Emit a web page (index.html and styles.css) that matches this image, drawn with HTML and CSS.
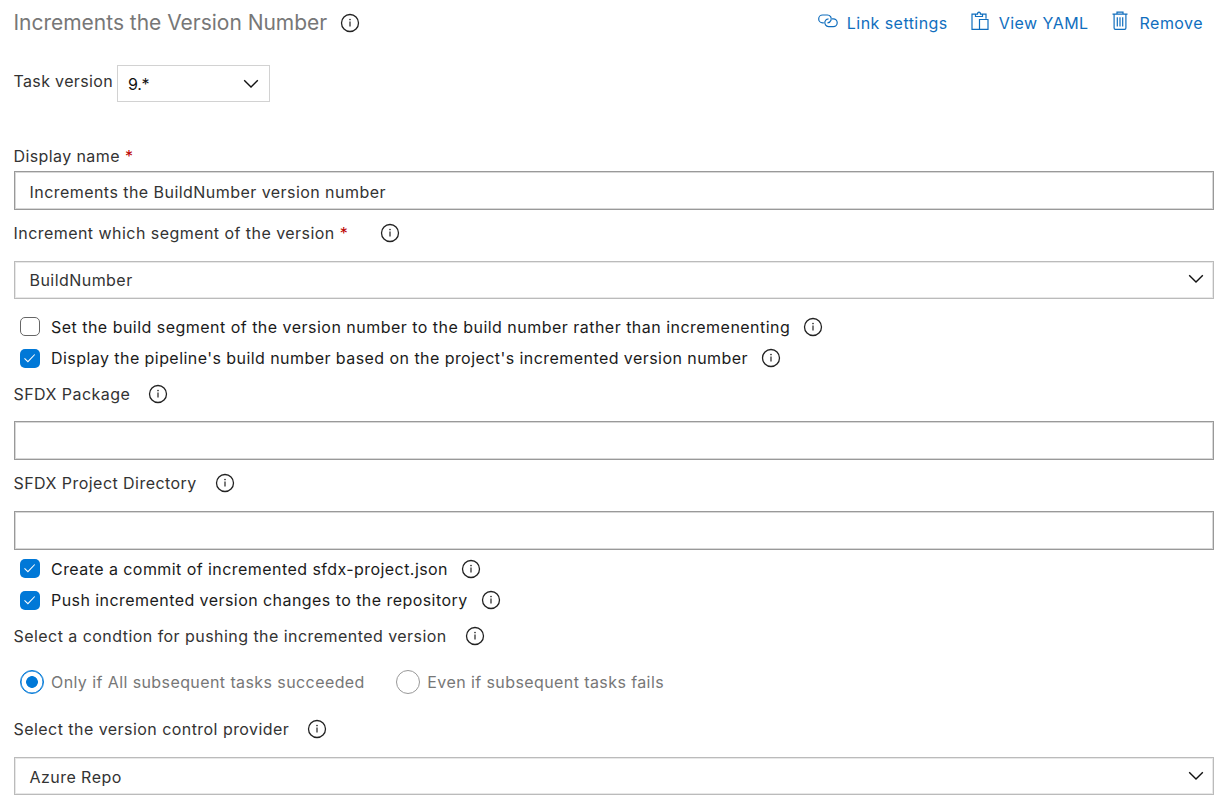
FILE: index.html
```html
<!DOCTYPE html>
<html lang="en">
<head>
<meta charset="utf-8">
<title>Increments the Version Number</title>
<link rel="stylesheet" href="styles.css">
</head>
<body>
<svg class="sprite" aria-hidden="true">
  <symbol id="info" viewBox="0 0 20 20"><circle cx="10" cy="10" r="8.500" fill="none" stroke="currentColor" stroke-width="1.300"/><path d="M10 8.500v5" stroke="currentColor" stroke-width="1.200"/><circle cx="10" cy="6.600" r=".8" fill="currentColor"/></symbol>
  <symbol id="chevron" viewBox="0 0 16 10"><path d="M1.200 1.200 8 8l6.800-6.800" fill="none" stroke="currentColor" stroke-width="1.400"/></symbol>
  <symbol id="check" viewBox="0 0 20 20"><path d="m4.200 9.800 3.600 3.500L15 5.800" fill="none" stroke="currentColor" stroke-width="1.100"/></symbol>
</svg>
<main class="task">
  <header class="header">
    <h1 class="title">Increments the Version Number</h1>
    <svg class="info"><use href="#info"/></svg>
    <nav class="actions">
      <a class="action"><svg class="action-icon link-icon" viewBox="0 0 20 14"><g fill="none" stroke="currentColor" stroke-width="1.200"><path d="M5.800 8.800H4.600A3.900 3.900 0 0 1 4.600 1h4.800a3.900 3.900 0 0 1 3.600 5.300A4 4 0 0 1 9.500 8.900"/><path d="M14 4.800h1.300a3.900 3.900 0 0 1 0 7.800h-4.700A3.900 3.900 0 0 1 7 7.400 4 4 0 0 1 10.500 4.800"/></g></svg><span>Link settings</span></a>
      <a class="action"><svg class="action-icon yaml-icon" viewBox="0 0 18 20"><path d="M8.500 18.300H1V3.200h3.500M11.500 3.200H15v4.500M4.500 5.500V3.200h2C6.500.3 9.500.3 9.500 3.200h2v2.300zM8.500 8.500H17v9.800H8.500z" fill="none" stroke="currentColor" stroke-width="1.200"/></svg><span>View YAML</span></a>
      <a class="action"><svg class="action-icon bin-icon" viewBox="0 0 16 20"><path d="M.5 3.200h15M5 3V1.200h6V3M2.100 3.200v13.900q0 1.300 1.300 1.300h9.200q1.300 0 1.300-1.300V3.200M5.300 6.200v9.200M8 6.200v9.200M10.700 6.200v9.200" fill="none" stroke="currentColor" stroke-width="1.200"/></svg><span>Remove</span></a>
    </nav>
  </header>
  <div class="version">
    <span class="version-label">Task version</span>
    <div class="version-select"><span>9.*</span><svg class="chevron"><use href="#chevron"/></svg></div>
  </div>
  <div class="label label-name"><span>Display name</span><span class="required">*</span></div>
  <div class="input"><span>Increments the BuildNumber version number</span></div>
  <div class="label label-segment"><span>Increment which segment of the version</span><span class="required">*</span><svg class="info info-far"><use href="#info"/></svg></div>
  <div class="select select-segment"><span>BuildNumber</span><svg class="chevron"><use href="#chevron"/></svg></div>
  <div class="checks checks-first">
    <label class="check check-long"><i class="box"></i><span>Set the build segment of the version number to the build number rather than incremenenting</span><svg class="info"><use href="#info"/></svg></label>
    <label class="check"><i class="box box-on"><svg><use href="#check"/></svg></i><span>Display the pipeline's build number based on the project's incremented version number</span><svg class="info"><use href="#info"/></svg></label>
  </div>
  <div class="label label-package"><span>SFDX Package</span><svg class="info"><use href="#info"/></svg></div>
  <div class="input input-empty"></div>
  <div class="label label-directory"><span>SFDX Project Directory</span><svg class="info"><use href="#info"/></svg></div>
  <div class="input input-empty"></div>
  <div class="checks">
    <label class="check"><i class="box box-on"><svg><use href="#check"/></svg></i><span>Create a commit of incremented sfdx-project.json</span><svg class="info"><use href="#info"/></svg></label>
    <label class="check"><i class="box box-on"><svg><use href="#check"/></svg></i><span>Push incremented version changes to the repository</span><svg class="info"><use href="#info"/></svg></label>
  </div>
  <div class="label label-condition"><span>Select a condtion for pushing the incremented version</span><svg class="info"><use href="#info"/></svg></div>
  <div class="radios">
    <label class="radio"><i class="ring ring-on"></i><span>Only if All subsequent tasks succeeded</span></label>
    <label class="radio"><i class="ring"></i><span>Even if subsequent tasks fails</span></label>
  </div>
  <div class="label label-provider"><span>Select the version control provider</span><svg class="info"><use href="#info"/></svg></div>
  <div class="select"><span>Azure Repo</span><svg class="chevron"><use href="#chevron"/></svg></div>
</main>
</body>
</html>
```
FILE: styles.css
```css
* { box-sizing: border-box; }
body {
  margin: 0;
  background: #fff;
  color: #333;
  font: 16px/20px Inter, "Liberation Sans", sans-serif;
  letter-spacing: 0.450px;
}
.sprite { display: none; }
.task {
  display: flex;
  flex-direction: column;
  height: 804px;
  padding: 0 12px 0 13.500px;
  overflow: hidden;
  white-space: nowrap;
}
.info { width: 20px; height: 20px; flex: none; color: #222; }
.header { display: flex; align-items: center; height: 46px; }
.title { margin: 0 13px 0 0; color: #777; font-size: 21px; font-weight: 400; letter-spacing: -0.020px; }
.actions { display: flex; margin: 0 11px 0 auto; gap: 23px; color: #106ebe; }
.action { display: flex; align-items: center; }
.action-icon { flex: none; margin-top: -4px; }
.link-icon { width: 20px; height: 14px; margin-right: 9px; }
.yaml-icon { width: 18px; height: 20px; margin-right: 10px; }
.bin-icon { width: 16px; height: 20px; margin-right: 12px; }
.version { display: flex; gap: 4px; height: 37px; margin: 19px 0 39px; letter-spacing: 0.350px; }
.version-label { padding-top: 6px; }
.version-select {
  display: flex;
  align-items: center;
  justify-content: space-between;
  width: 153px;
  padding: 1px 10px 0;
  border: 1.500px solid #d2d2d2;
  color: #111;
  letter-spacing: -0.300px;
}
.chevron { width: 16px; height: 10px; color: #111; }
.label { display: flex; align-items: center; flex: none; }
.label .info { margin-left: 18px; }
.label .info-far { margin-left: 32px; }
.required { margin-left: 5px; color: #b00; }
.label-name { height: 30px; letter-spacing: 0.400px; }
.label-segment { height: 45px; margin-bottom: 6px; }
.label-package { height: 40px; margin-bottom: 7px; }
.label-directory { height: 44px; margin-bottom: 7px; }
.label-directory { padding-top: 1px; }
.label-condition { height: 40px; }
.label-provider { height: 42px; margin-bottom: 7px; }
.input, .select {
  display: flex;
  align-items: center;
  flex: none;
  height: 39px;
  padding: 3px 15px 0;
  border: 1px solid #999;
  box-shadow: inset 0 0 0 1px #d8d8d8;
}
.select { justify-content: space-between; height: 38px; padding: 1px 9px 0 15px; border-color: #bbb; box-shadow: inset 0 0 0 1px #e8e8e8; }
.select .chevron { margin-top: -2px; }
.select-segment { padding-top: 0; }
.checks { padding: 3px 0 0 6px; }
.checks-first { padding-top: 12px; }
.check { display: flex; align-items: center; height: 31.500px; color: #1b1b1b; letter-spacing: 0.440px; }
.check-long { letter-spacing: 0.475px; }
.check .info { margin-left: 13px; }
.box { width: 20px; height: 19px; margin-right: 11.500px; border: 1.300px solid #666; border-radius: 5px; flex: none; }
.box-on { border: 0; background: #0078d7; color: #fff; }
.box-on svg { display: block; width: 20px; height: 19px; }
.radios { display: flex; height: 52px; padding-left: 6px; gap: 31px; color: #777; letter-spacing: 0.410px; }
.radio { display: flex; align-items: center; }
.radio span { padding-bottom: 1px; }
.ring { width: 24px; height: 24px; margin-right: 7.500px; border: 1px solid #999; border-radius: 50%; flex: none; }
.ring-on { border: 1.500px solid #0078d7; background: radial-gradient(circle, #0078d7 5.500px, #fff 6.200px); box-shadow: inset 0 0 0 0.500px #0078d7; }
```
